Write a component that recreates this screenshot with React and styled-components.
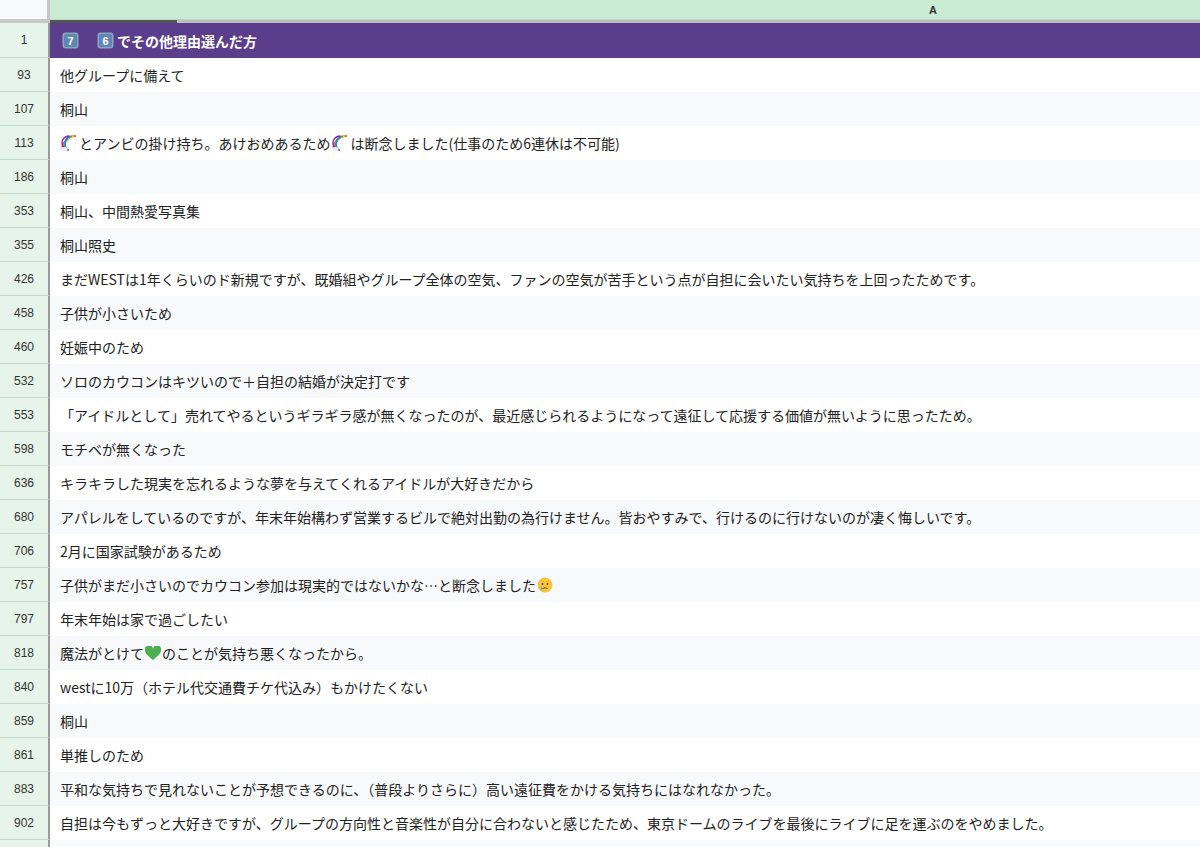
import React from 'react';
import styled, { createGlobalStyle } from 'styled-components';

const Global = createGlobalStyle`
  body { margin: 0; background: #fff; overflow: hidden; font-family: "Noto Sans CJK JP", "Liberation Sans", sans-serif; }
`;

const Sheet = styled.div`
  width: 1200px;
  height: 847px;
  overflow: hidden;
  display: grid;
  grid-template-columns: 50px 1766px;
  grid-auto-rows: 34px;
  grid-template-rows: 20px 3px 35px;
`;

const Corner = styled.div`
  background: #f8f9fa;
  border-right: 3px solid #c7c7c7;
  border-bottom: 1px solid #c7c7c7;
  box-sizing: border-box;
`;

const ColHead = styled.div`
  background: #c9ecd3;
  color: #333;
  font: bold 11px "Liberation Sans", sans-serif;
  display: flex;
  align-items: center;
  justify-content: center;
  border-bottom: 1px solid #b9dcc2;
  box-sizing: border-box;
`;

const Divider = styled.div`
  background: ${(p) => p.$c};
  grid-column: ${(p) => p.$col};
  display: flex;
`;

const DarkSeg = styled.div`
  width: 127px;
  background: #555;
`;

const RowNum = styled.div`
  background: #e6f4ea;
  border-bottom: 1px solid #c4d6c8;
  border-right: 2px solid #9a9a9a;
  box-sizing: border-box;
  color: #333;
  font: 12px "Liberation Sans", sans-serif;
  display: flex;
  align-items: center;
  justify-content: center;
`;

const Cell = styled.div`
  background: ${(p) => (p.$head ? '#5b3e8b' : p.$alt ? '#f8f9fb' : '#fff')};
  color: ${(p) => (p.$head ? '#fff' : '#222')};
  font-weight: ${(p) => (p.$head ? 700 : 400)};
  font-size: 14px;
  display: flex;
  align-items: center;
  padding-left: 10px;
  white-space: nowrap;
  gap: 1px;
`;

const Key = ({ n }) => (
  <svg width="17" height="17" viewBox="0 0 17 17" style={{ margin: '0 2px' }}>
    <rect x="0.5" y="0.5" width="16" height="16" rx="3" fill="#8aa6c2" />
    <rect x="2" y="2" width="13" height="13" rx="2" fill="#5f87b3" />
    <text x="8.5" y="12.5" fontSize="11" fill="#fff" textAnchor="middle" fontFamily="Liberation Sans" fontWeight="bold">{n}</text>
  </svg>
);

const Rainbow = () => (
  <svg width="18" height="16" viewBox="0 0 18 16">
    {['#e53935', '#fb8c00', '#fdd835', '#43a047', '#1e88e5', '#8e24aa'].map((c, i) => (
      <path key={c} d={`M${2 + i * 1.4} 15 A${14 - i * 1.4} ${14 - i * 1.4} 0 0 1 ${16 + 14 - i * 1.4 - 14 + i * 0} 1`} fill="none" stroke={c} strokeWidth="1.5" transform={`translate(0 0)`} />
    ))}
    <ellipse cx="4" cy="14" rx="3.5" ry="2" fill="#eee" />
  </svg>
);

const Heart = () => (
  <svg width="16" height="15" viewBox="0 0 16 15">
    <path d="M8 14 C2 9 0 7 0 4 A4 4 0 0 1 8 3 A4 4 0 0 1 16 4 C16 7 14 9 8 14Z" fill="#4caf50" />
  </svg>
);

const Crying = () => (
  <svg width="16" height="16" viewBox="0 0 16 16">
    <circle cx="8" cy="8" r="7.5" fill="#f7c53b" />
    <circle cx="5.5" cy="7" r="1" fill="#6b4a1a" />
    <circle cx="10.5" cy="7" r="1" fill="#6b4a1a" />
    <path d="M5.5 11.5 Q8 10 10.5 11.5" stroke="#6b4a1a" fill="none" />
    <path d="M4 9 Q3 12 4.5 13 Q6 12 4 9Z" fill="#4fa3e0" />
  </svg>
);

const rows = [
  ['93', '他グループに備えて'],
  ['107', '桐山'],
  ['113', <><Rainbow />とアンビの掛け持ち。あけおめあるため<Rainbow />は断念しました(仕事のため6連休は不可能)</>],
  ['186', '桐山'],
  ['353', '桐山、中間熱愛写真集'],
  ['355', '桐山照史'],
  ['426', 'まだWESTは1年くらいのド新規ですが、既婚組やグループ全体の空気、ファンの空気が苦手という点が自担に会いたい気持ちを上回ったためです。'],
  ['458', '子供が小さいため'],
  ['460', '妊娠中のため'],
  ['532', 'ソロのカウコンはキツいので＋自担の結婚が決定打です'],
  ['553', '「アイドルとして」売れてやるというギラギラ感が無くなったのが、最近感じられるようになって遠征して応援する価値が無いように思ったため。'],
  ['598', 'モチベが無くなった'],
  ['636', 'キラキラした現実を忘れるような夢を与えてくれるアイドルが大好きだから'],
  ['680', 'アパレルをしているのですが、年末年始構わず営業するビルで絶対出勤の為行けません。皆おやすみで、行けるのに行けないのが凄く悔しいです。'],
  ['706', '2月に国家試験があるため'],
  ['757', <>子供がまだ小さいのでカウコン参加は現実的ではないかな…と断念しました<Crying /></>],
  ['797', '年末年始は家で過ごしたい'],
  ['818', <>魔法がとけて<Heart />のことが気持ち悪くなったから。</>],
  ['840', 'westに10万（ホテル代交通費チケ代込み）もかけたくない'],
  ['859', '桐山'],
  ['861', '単推しのため'],
  ['883', '平和な気持ちで見れないことが予想できるのに、（普段よりさらに）高い遠征費をかける気持ちにはなれなかった。'],
  ['902', '自担は今もずっと大好きですが、グループの方向性と音楽性が自分に合わないと感じたため、東京ドームのライブを最後にライブに足を運ぶのをやめました。'],
  ['', ''],
];

export default function App() {
  return (
    <>
      <Global />
      <Sheet>
        <Corner />
        <ColHead>A</ColHead>
        <Divider $c="#c7c7c7" $col="1" />
        <Divider $c="#bdbdbd" $col="2"><DarkSeg /></Divider>
        <RowNum>1</RowNum>
        <Cell $head><Key n="7" /><span style={{ width: 12 }} /><Key n="6" />でその他理由選んだ方</Cell>
        {rows.map(([n, t], i) => (
          <React.Fragment key={i}>
            <RowNum>{n}</RowNum>
            <Cell $alt={i % 2 === 1}>{t}</Cell>
          </React.Fragment>
        ))}
      </Sheet>
    </>
  );
}
